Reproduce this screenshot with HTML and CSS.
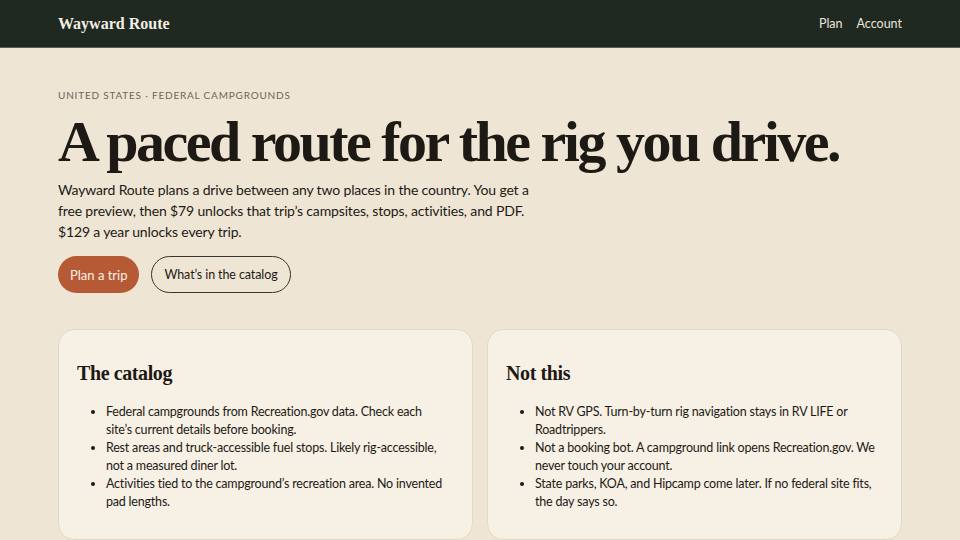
FILE: index.html
```html
<!DOCTYPE html>
<html lang="en">
<head>
    <meta charset="UTF-8">
    <meta name="viewport" content="width=device-width, initial-scale=1.0">
    <title>Wayward Route</title>
    <link rel="stylesheet" href="styles.css">
</head>
<body>
    <header class="topbar">
        <a href="#" class="brand">Wayward Route</a>
        <nav class="nav">
            <a href="#">Plan</a>
            <a href="#">Account</a>
        </nav>
    </header>

    <main class="page">
        <section class="hero">
            <div class="eyebrow">United States · Federal campgrounds</div>
            <h1>A paced route for the rig you drive.</h1>
            <p class="lede">Wayward Route plans a drive between any two places in the country. You get a free preview, then $79 unlocks that trip’s campsites, stops, activities, and PDF. $129 a year unlocks every trip.</p>
            <div class="actions">
                <a href="#" class="btn btn-primary">Plan a trip</a>
                <a href="#" class="btn btn-outline">What’s in the catalog</a>
            </div>
        </section>

        <section class="cards">
            <div class="card">
                <h2>The catalog</h2>
                <ul>
                    <li>Federal campgrounds from Recreation.gov data. Check each site’s current details before booking.</li>
                    <li>Rest areas and truck-accessible fuel stops. Likely rig-accessible, not a measured diner lot.</li>
                    <li>Activities tied to the campground’s recreation area. No invented pad lengths.</li>
                </ul>
            </div>
            <div class="card">
                <h2>Not this</h2>
                <ul>
                    <li>Not RV GPS. Turn-by-turn rig navigation stays in RV LIFE or Roadtrippers.</li>
                    <li>Not a booking bot. A campground link opens Recreation.gov. We never touch your account.</li>
                    <li>State parks, KOA, and Hipcamp come later. If no federal site fits, the day says so.</li>
                </ul>
            </div>
        </section>
    </main>
</body>
</html>
```

FILE: styles.css
```css
* {
    margin: 0;
    padding: 0;
    box-sizing: border-box;
}

:root {
    --ink: #1d1a16;
    --forest: #1f2922;
    --sand: #efe5d4;
    --paper: #f7f0e4;
    --rust: #b65a36;
    --muted: #6d6558;
}

body {
    background-color: var(--sand);
    color: var(--ink);
    font-family: 'Lato', sans-serif;
}

a {
    color: inherit;
    text-decoration: none;
}

.topbar {
    height: 48px;
    background-color: var(--forest);
    display: flex;
    align-items: center;
    justify-content: space-between;
    padding: 0 58px;
    border-bottom: 1px solid #59604f;
}

.brand {
    font-family: 'Liberation Serif', serif;
    font-weight: bold;
    font-size: 16px;
    color: #f3ede2;
}

.nav {
    display: flex;
    gap: 14px;
}

.nav a {
    font-size: 12.5px;
    color: #e9e4da;
}

.page {
    padding: 0 58px;
}

.hero {
    padding-top: 41px;
}

.eyebrow {
    font-size: 10px;
    letter-spacing: 0.8px;
    text-transform: uppercase;
    color: var(--muted);
}

.hero h1 {
    font-family: 'Liberation Serif', serif;
    font-weight: bold;
    font-size: 58px;
    letter-spacing: -2.5px;
    line-height: 1;
    margin-top: 12px;
    white-space: nowrap;
}

.lede {
    font-size: 14px;
    letter-spacing: -0.15px;
    line-height: 21px;
    max-width: 485px;
    margin-top: 8px;
}

.actions {
    display: flex;
    gap: 12px;
    margin-top: 14px;
}

.btn {
    height: 37px;
    display: inline-flex;
    align-items: center;
    padding: 0 12px;
    border-radius: 19px;
    font-size: 13px;
}

.btn-primary {
    background-color: var(--rust);
    color: #fbf1e8;
}

.btn-outline {
    border: 1px solid #3a332a;
    font-size: 12.5px;
    letter-spacing: -0.1px;
}

.cards {
    display: grid;
    grid-template-columns: 1fr 1fr;
    gap: 14px;
    margin-top: 36px;
}

.card {
    background-color: var(--paper);
    border: 1px solid #e4d8c4;
    border-radius: 16px;
    padding: 32px 22px 28px 18px;
}

.card h2 {
    font-family: 'Liberation Serif', serif;
    font-weight: bold;
    font-size: 20px;
    letter-spacing: -0.4px;
}

.card ul {
    margin-top: 18px;
    padding-left: 29px;
}

.card li {
    font-size: 12.5px;
    letter-spacing: -0.2px;
    line-height: 18px;
}
```
